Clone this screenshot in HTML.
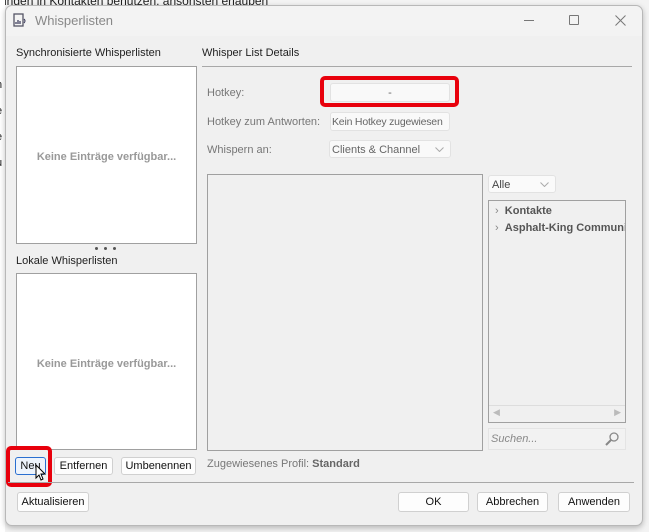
<!DOCTYPE html>
<html><head><meta charset="utf-8"><style>
*{box-sizing:border-box;margin:0;padding:0}
body{width:649px;height:532px;overflow:hidden;background:#f3f3f3;font-family:"Liberation Sans",sans-serif;font-size:11px;color:#222;position:relative}
.a{position:absolute}
.win{left:5px;top:5px;width:638px;height:521px;background:#f0f0f0;border:1px solid #b8b8b8;border-radius:7px;box-shadow:0 2px 6px rgba(0,0,0,.25)}
.title{left:6px;top:6px;width:636px;height:30px;background:#f3f3f3;border-radius:7px 7px 0 0}
.box{background:#fff;border:1px solid #a0a0a0}
.btn{background:#fdfdfd;border:1px solid #d0d0d0;border-radius:3px;text-align:center;font-size:11px;line-height:17px;color:#111}
.lbl{color:#777}
.fld{background:#f9f9f9;border:1px solid #e2e2e2;border-radius:3px;color:#666;line-height:18px;white-space:nowrap;overflow:hidden}
.empty{color:#999;font-weight:bold;font-size:11px;width:100%;text-align:center}
.red{border:4px solid #e8000c;border-radius:5px}
.dot{position:absolute;width:3px;height:3px;border-radius:50%;background:#555}
</style></head><body>
<div class="a" style="left:0;top:-6px;font-size:12px;color:#222;white-space:nowrap">ungen in Kontakten benutzen, ansonsten erlauben</div>
<div class="a" style="left:0;top:0;width:5px;height:532px;background:#fff"></div>
<div class="a" style="left:-4px;top:72px;font-size:11px;line-height:26px">n<br>e<br>e<br>u</div>
<div class="a win"></div>
<div class="a title"></div>
<svg class="a" style="left:13px;top:13px" width="14" height="14" viewBox="0 0 14 14"><rect x="1" y="1" width="9" height="12" fill="none" stroke="#556" stroke-width="1.3"/><path d="M3 9v2M5 7v4M7 8v3" stroke="#335" stroke-width="1.2"/><path d="M11 6q2 2 0 4" stroke="#335" fill="none"/></svg>
<div class="a" style="left:35px;top:13px;font-size:13px;color:#888">Whisperlisten</div>
<div class="a" style="left:524px;top:20px;width:10px;height:1px;background:#777"></div>
<div class="a" style="left:569px;top:15px;width:10px;height:10px;border:1px solid #777;border-radius:1px"></div>
<svg class="a" style="left:615px;top:15px" width="11" height="11"><path d="M.5 .5l10 10M10.5 .5l-10 10" stroke="#777"/></svg>

<div class="a" style="left:16px;top:47px">Synchronisierte Whisperlisten</div>
<div class="a box" style="left:16px;top:66px;width:181px;height:178px"><div class="a empty" style="top:84px">Keine Einträge verfügbar...</div></div>
<div class="dot" style="left:95px;top:247px"></div><div class="dot" style="left:104px;top:247px"></div><div class="dot" style="left:113px;top:247px"></div>
<div class="a" style="left:16px;top:255px">Lokale Whisperlisten</div>
<div class="a box" style="left:16px;top:273px;width:181px;height:177px"><div class="a empty" style="top:84px">Keine Einträge verfügbar...</div></div>

<div class="a red" style="left:6px;top:446px;width:46px;height:41px"></div>
<div class="a btn" style="left:15px;top:457px;width:31px;height:18px;border-color:#2a6fd0;background:#eef4fc">Neu</div>
<svg class="a" style="left:35px;top:464px" width="12" height="18"><path d="M1 1v13l3-3 2 5 2-1-2-5h4z" fill="#fff" stroke="#000"/></svg>
<div class="a btn" style="left:54px;top:457px;width:59px;height:18px">Entfernen</div>
<div class="a btn" style="left:121px;top:457px;width:75px;height:18px">Umbenennen</div>

<div class="a" style="left:202px;top:47px">Whisper List Details</div>
<div class="a" style="left:202px;top:66px;width:430px;height:1px;background:#a8a8a8"></div>
<div class="a lbl" style="left:207px;top:87px">Hotkey:</div>
<div class="a red" style="left:320px;top:76px;width:139px;height:31px"></div>
<div class="a fld" style="left:330px;top:83px;width:120px;height:19px;text-align:center">-</div>
<div class="a lbl" style="left:207px;top:116px">Hotkey zum Antworten:</div>
<div class="a fld" style="left:330px;top:112px;width:120px;height:19px;padding-left:1px;font-size:10.5px;letter-spacing:-0.2px">Kein Hotkey zugewiesen</div>
<div class="a lbl" style="left:207px;top:144px">Whispern an:</div>
<div class="a fld" style="left:329px;top:140px;width:122px;height:18px;padding-left:2px">Clients &amp; Channel<svg class="a" style="right:6px;top:6px" width="9" height="5"><path d="M.5 .5l4 4 4-4" stroke="#aaa" fill="none"/></svg></div>
<div class="a" style="left:207px;top:174px;width:276px;height:277px;background:#f0f0f0;border:1px solid #a0a0a0"></div>
<div class="a fld" style="left:488px;top:175px;width:68px;height:18px;padding-left:3px;background:#fafafa;color:#444">Alle<svg class="a" style="right:6px;top:6px" width="9" height="5"><path d="M.5 .5l4 4 4-4" stroke="#aaa" fill="none"/></svg></div>
<div class="a" style="left:488px;top:200px;width:138px;height:223px;background:#f0f0f0;border:1px solid #a0a0a0">
<div class="a" style="left:6px;top:2px;color:#555;font-weight:bold;font-size:11px;line-height:17px;white-space:nowrap;width:130px;overflow:hidden"><span style="color:#888;font-weight:normal">›</span>&nbsp;&nbsp;Kontakte<br><span style="color:#888;font-weight:normal">›</span>&nbsp;&nbsp;Asphalt-King Community</div>
<div class="a" style="left:0;top:204px;width:136px;height:17px;border-top:1px solid #ddd"><span class="a" style="left:4px;top:1px;color:#bbb;font-size:9px">◀</span><span class="a" style="right:4px;top:1px;color:#bbb;font-size:9px">▶</span></div>
</div>
<div class="a" style="left:488px;top:428px;width:138px;height:22px;border:1px solid #e4e4e4;background:#f2f2f2"><span class="a" style="left:2px;top:4px;font-style:italic;color:#888">Suchen...</span>
<svg class="a" style="right:6px;top:3px" width="14" height="14"><circle cx="9" cy="5" r="4" fill="none" stroke="#888" stroke-width="1.3"/><path d="M6 8l-5 5" stroke="#888" stroke-width="2"/></svg></div>
<div class="a lbl" style="left:207px;top:458px">Zugewiesenes Profil: <b style="color:#666">Standard</b></div>

<div class="a" style="left:8px;top:482px;width:626px;height:1px;background:#a8a8a8"></div>
<div class="a btn" style="left:17px;top:492px;width:72px;height:20px;line-height:19px">Aktualisieren</div>
<div class="a btn" style="left:398px;top:492px;width:71px;height:20px;line-height:19px">OK</div>
<div class="a btn" style="left:477px;top:492px;width:71px;height:20px;line-height:19px">Abbrechen</div>
<div class="a btn" style="left:558px;top:492px;width:72px;height:20px;line-height:19px">Anwenden</div>
</body></html>
